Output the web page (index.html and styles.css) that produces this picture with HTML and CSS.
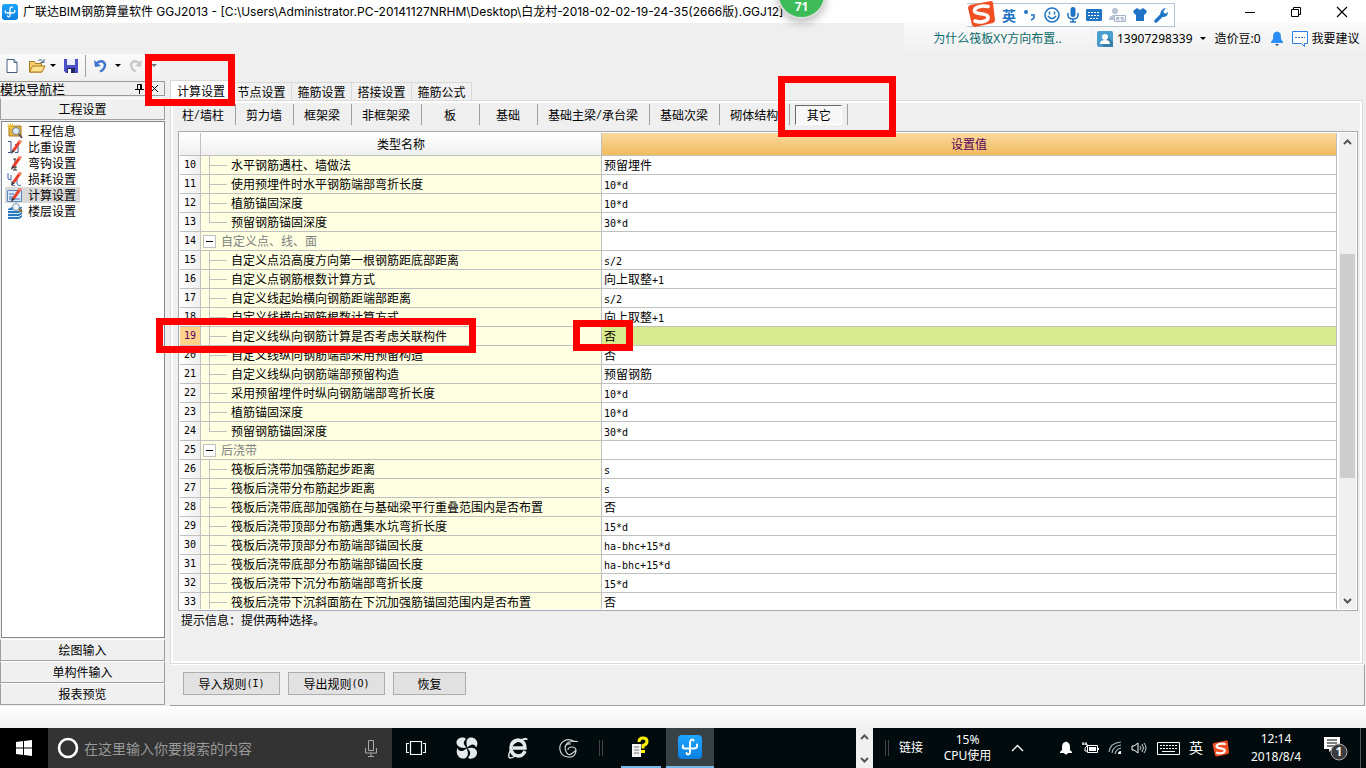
FILE: index.html
```html
<!DOCTYPE html>
<html lang="zh-CN">
<head>
<meta charset="utf-8">
<title>广联达BIM钢筋算量软件 GGJ2013</title>
<link rel="stylesheet" href="styles.css">
</head>
<body>
<svg class="defs" width="0" height="0" aria-hidden="true">
  <defs>
    <linearGradient id="blue" x1="0" y1="0" x2="0" y2="1"><stop offset="0" stop-color="#1ea6ff"/><stop offset="1" stop-color="#0b7fe0"/></linearGradient>
    <symbol id="app" viewBox="0 0 24 24"><rect width="24" height="24" rx="4" fill="url(#blue)"/><path d="M12 17V8c0-4 3-4 3.500-2.500M5 10.500c-1 3 1 3 3 3h8c3 0 3.500-2 3-4M12 13v4c0 3-3 3-3.500 1" fill="none" stroke="#fff" stroke-width="2" stroke-linecap="round"/></symbol>
    <symbol id="sogou" viewBox="0 0 28 28"><path d="M3 5 24 1q2 0 2 2l2 17q0 2-2 3L8 27q-2 0-3-2L1 8q0-2 2-3z" fill="#f04e23"/><path d="M21 6.500C15 5 7 7 7.500 11s13 1.500 13.500 6-8 6-13 4" fill="none" stroke="#fff" stroke-width="3.600" stroke-linecap="round"/></symbol>
    <symbol id="pencil" viewBox="0 0 16 16"><path d="M5 11 12 1l3 1-7 10z" fill="#e8422b"/><path d="m12 1 3 1-1 2-3-1z" fill="#f7906f"/><path d="m5 11 3 1-4 3z" fill="#333"/></symbol>
  </defs>
</svg>

<header class="titlebar">
  <svg class="app-icon" width="16" height="16"><use href="#app"/></svg>
  <h1 class="title">广联达BIM钢筋算量软件 GGJ2013 - [C:\Users\Administrator.PC-20141127NRHM\Desktop\白龙村-2018-02-02-19-24-35(2666版).GGJ12]</h1>
  <div class="win-controls">
    <button type="button" aria-label="最小化"><svg width="12" height="12" viewBox="0 0 12 12"><path d="M1 6.500h10" stroke="#000"/></svg></button>
    <button type="button" aria-label="还原"><svg width="12" height="12" viewBox="0 0 12 12"><path d="M1.500 3.500h7v7h-7zM3.500 3.500v-2h7v7h-2" fill="none" stroke="#000"/></svg></button>
    <button type="button" aria-label="关闭"><svg width="12" height="12" viewBox="0 0 12 12"><path d="m1 1 10 10M11 1 1 11" stroke="#000" stroke-width="1.200"/></svg></button>
  </div>
</header>

<section class="ribbon">
  <div class="account">
    <a class="tip" href="#">为什么筏板XY方向布置..</a>
    <div class="user">
      <svg width="16" height="16" viewBox="0 0 16 16"><rect width="16" height="16" rx="2" fill="#4a9fd0"/><path d="m10 5 6 6v5H7l-4-4z" fill="#347fa8"/><circle cx="8" cy="6" r="3" fill="#fff"/><path d="M3 13q0-4 5-4t5 4z" fill="#fff"/></svg>
      <button type="button" class="phone">13907298339<svg width="6" height="4" viewBox="0 0 6 4"><path d="M0 0h6L3 3z" fill="#000"/></svg></button>
      <span class="beans">造价豆:0</span>
      <svg class="bell" width="14" height="16" viewBox="0 0 14 16"><path d="M4 2q3-3 6 0 1 1 1 6l2 3v1H1v-1l2-3q0-5 1-6z" fill="#2c8df4"/><path d="M5 13h4l-2 2z" fill="#1b4f91"/></svg>
      <a class="advice" href="#"><svg width="16" height="16" viewBox="0 0 16 16"><path d="M.5.5h15v12h-3v3l-3-3h-9z" fill="#fff" stroke="#2c7fe0"/><path d="M3 6.500h10" stroke="#2c7fe0" stroke-dasharray="2 1"/></svg>我要建议</a>
    </div>
  </div>
  <div class="toolbar">
    <button type="button" aria-label="新建"><svg width="16" height="16" viewBox="0 0 16 16"><path d="M3 1.500h7l3 3v10H3z" fill="#fff" stroke="#44607e"/><path d="M10 1.500v3h3" fill="#bcd0e6" stroke="#44607e"/></svg></button>
    <button type="button" class="open" aria-label="打开"><svg width="18" height="16" viewBox="0 0 18 16"><path d="M1.500 14V3.500h5l1 2h6V14z" fill="#f6cd69" stroke="#a9791c"/><path d="m1.500 14 3-6H17l-3 6z" fill="#ffe08a" stroke="#a9791c"/><path d="M10 3q3-3 5 1m1-3v3.500h-3.500" fill="none" stroke="#42688d"/></svg><svg width="6" height="4" viewBox="0 0 6 4"><path d="M0 0h6L3 3z" fill="#000"/></svg></button>
    <button type="button" class="save" aria-label="保存"><svg width="16" height="16" viewBox="0 0 16 16"><path d="M1 1h14v14H3l-2-2z" fill="#4b50c8"/><path d="M4 1h8v6H4z" fill="#e8eefa"/><path d="M4 10h8v5H4z" fill="#23265d"/><path d="M5 11h3v4H5z" fill="#fff"/></svg></button>
    <button type="button" class="undo" aria-label="撤销"><svg width="14" height="14" viewBox="0 0 14 14"><path d="M3 4.500q7-5 9 1 0 5-5 7" fill="none" stroke="#3d74cf" stroke-width="2.400"/><path d="m1 1 1 7 6-1z" fill="#3d74cf"/></svg><svg width="6" height="4" viewBox="0 0 6 4"><path d="M0 0h6L3 3z" fill="#000"/></svg></button>
    <button type="button" class="redo" aria-label="重做"><svg width="14" height="14" viewBox="0 0 14 14"><path d="M11 4.500q-7-5-9 1 0 5 5 7" fill="none" stroke="#c8c8c8" stroke-width="2.400"/><path d="m13 1-1 7-6-1z" fill="#c8c8c8"/></svg><svg width="6" height="4" viewBox="0 0 6 4"><path d="M0 0h6L3 3z" fill="#777"/></svg></button>
  </div>
</section>

<div class="workspace">
  <aside class="sidebar">
    <div class="dock-title"><span>模块导航栏</span>
      <button type="button" aria-label="固定"><svg width="9" height="11" viewBox="0 0 9 11"><path d="M2.500 6V1.500h4V6M0 6.500h9M4.500 7v4M5.500 2v4" fill="none" stroke="#000"/></svg></button>
      <button type="button" class="dock-close" aria-label="关闭"><svg width="9" height="9" viewBox="0 0 9 9"><path d="m1 1 7 7M8 1 1 8" stroke="#000"/></svg></button>
    </div>
    <button type="button" class="module">工程设置</button>
    <nav class="nav">
      <a href="#"><svg width="16" height="16" viewBox="0 0 16 16"><path d="M2 3h12v10H2z" fill="#e5b343" stroke="#a67b1e"/><path d="M0 3h7M3.500 0v7M1 1l5 5M6 1 1 6" stroke="#f5c332"/><circle cx="9" cy="8" r="3.500" fill="#dcecf8" stroke="#6a7f96"/><path d="m12 11 3 4" stroke="#555" stroke-width="2"/></svg>工程信息</a>
      <a href="#"><svg width="16" height="16" viewBox="0 0 16 16"><path d="M1 2.500h3v11H1M8 5.500h3v8H8" fill="none" stroke="#3b4f8c"/><use href="#pencil"/></svg>比重设置</a>
      <a href="#"><svg width="16" height="16" viewBox="0 0 16 16"><path d="M6 4h3M8 4v11M6 12h4M6 15h4" fill="none" stroke="#333"/><use href="#pencil"/></svg>弯钩设置</a>
      <a href="#"><svg width="16" height="16" viewBox="0 0 16 16"><path d="M1 2v6l3 1V4m1 6v4l3 1m2-8v6q2 3 4 1" fill="none" stroke="#3a6ba8"/><use href="#pencil"/></svg>损耗设置</a>
      <a href="#" class="selected"><svg width="16" height="16" viewBox="0 0 16 16"><path d="M.5 3.500h14v11H.5z" fill="#dbeaff" stroke="#5788bd"/><path d="M2 7h5M2 10h4M2 12h11" stroke="#3d75b5"/><use href="#pencil"/></svg>计算设置</a>
      <a href="#"><svg width="16" height="16" viewBox="0 0 16 16"><path d="m1 6 4-2h10v10l-3 2H1z" fill="#2a7abd"/><path d="M1 7.500h11l3-2M1 10.500h11l3-2M1 13.500h11l3-2" fill="none" stroke="#d9ecfa"/><circle cx="9" cy="4" r="3.500" fill="#e9f3fb" stroke="#8296a8"/><path d="m12 6 3 3" stroke="#9a682f" stroke-width="2"/></svg>楼层设置</a>
    </nav>
    <button type="button" class="module">绘图输入</button>
    <button type="button" class="module">单构件输入</button>
    <button type="button" class="module">报表预览</button>
  </aside>

  <main class="main">
    <div class="tabs">
      <button type="button" class="active">计算设置</button><button type="button">节点设置</button><button type="button">箍筋设置</button><button type="button">搭接设置</button><button type="button">箍筋公式</button>
    </div>
    <section class="panel">
      <div class="subtabs">
        <button type="button" class="first">柱<span class="m">/</span>墙柱</button><button type="button">剪力墙</button><button type="button">框架梁</button><button type="button">非框架梁</button><button type="button">板</button><button type="button">基础</button><button type="button">基础主梁<span class="m">/</span>承台梁</button><button type="button">基础次梁</button><button type="button">砌体结构</button><button type="button" class="pressed"><span>其它</span></button>
      </div>
      <div class="grid">
        <div class="grid-view">
        <table>
          <colgroup><col class="c-no"><col class="c-name"><col></colgroup>
          <thead><tr><th></th><th>类型名称</th><th class="sorted">设置值</th></tr></thead>
          <tbody>
            <tr><th>10</th><td><div class="leaf">水平钢筋遇柱、墙做法</div></td><td>预留埋件</td></tr>
            <tr><th>11</th><td><div class="leaf">使用预埋件时水平钢筋端部弯折长度</div></td><td><span class="m">10*d</span></td></tr>
            <tr><th>12</th><td><div class="leaf">植筋锚固深度</div></td><td><span class="m">10*d</span></td></tr>
            <tr><th>13</th><td><div class="leaf last">预留钢筋锚固深度</div></td><td><span class="m">30*d</span></td></tr>
            <tr><th>14</th><td><div class="group"><button type="button" aria-label="折叠"></button>自定义点、线、面</div></td><td></td></tr>
            <tr><th>15</th><td><div class="leaf">自定义点沿高度方向第一根钢筋距底部距离</div></td><td><span class="m">s/2</span></td></tr>
            <tr><th>16</th><td><div class="leaf">自定义点钢筋根数计算方式</div></td><td>向上取整<span class="m">+1</span></td></tr>
            <tr><th>17</th><td><div class="leaf">自定义线起始横向钢筋距端部距离</div></td><td><span class="m">s/2</span></td></tr>
            <tr><th>18</th><td><div class="leaf">自定义线横向钢筋根数计算方式</div></td><td>向上取整<span class="m">+1</span></td></tr>
            <tr class="current"><th>19</th><td><div class="leaf">自定义线纵向钢筋计算是否考虑关联构件</div></td><td>否</td></tr>
            <tr><th>20</th><td><div class="leaf">自定义线纵向钢筋端部采用预留构造</div></td><td>否</td></tr>
            <tr><th>21</th><td><div class="leaf">自定义线纵向钢筋端部预留构造</div></td><td>预留钢筋</td></tr>
            <tr><th>22</th><td><div class="leaf">采用预留埋件时纵向钢筋端部弯折长度</div></td><td><span class="m">10*d</span></td></tr>
            <tr><th>23</th><td><div class="leaf">植筋锚固深度</div></td><td><span class="m">10*d</span></td></tr>
            <tr><th>24</th><td><div class="leaf last">预留钢筋锚固深度</div></td><td><span class="m">30*d</span></td></tr>
            <tr><th>25</th><td><div class="group"><button type="button" aria-label="折叠"></button>后浇带</div></td><td></td></tr>
            <tr><th>26</th><td><div class="leaf">筏板后浇带加强筋起步距离</div></td><td><span class="m">s</span></td></tr>
            <tr><th>27</th><td><div class="leaf">筏板后浇带分布筋起步距离</div></td><td><span class="m">s</span></td></tr>
            <tr><th>28</th><td><div class="leaf">筏板后浇带底部加强筋在与基础梁平行重叠范围内是否布置</div></td><td>否</td></tr>
            <tr><th>29</th><td><div class="leaf">筏板后浇带顶部分布筋遇集水坑弯折长度</div></td><td><span class="m">15*d</span></td></tr>
            <tr><th>30</th><td><div class="leaf">筏板后浇带顶部分布筋端部锚固长度</div></td><td><span class="m">ha-bhc+15*d</span></td></tr>
            <tr><th>31</th><td><div class="leaf">筏板后浇带底部分布筋端部锚固长度</div></td><td><span class="m">ha-bhc+15*d</span></td></tr>
            <tr><th>32</th><td><div class="leaf">筏板后浇带下沉分布筋端部弯折长度</div></td><td><span class="m">15*d</span></td></tr>
            <tr><th>33</th><td><div class="leaf">筏板后浇带下沉斜面筋在下沉加强筋锚固范围内是否布置</div></td><td>否</td></tr>
          </tbody>
        </table>
        </div>
        <div class="scrollbar">
          <button type="button" aria-label="向上滚动"><svg width="9" height="6" viewBox="0 0 9 6"><path d="m1 5 3.500-3.500L8 5" fill="none" stroke="#555" stroke-width="2"/></svg></button>
          <div class="track"><div class="thumb"></div></div>
          <button type="button" aria-label="向下滚动"><svg width="9" height="6" viewBox="0 0 9 6"><path d="m1 1 3.500 3.500L8 1" fill="none" stroke="#555" stroke-width="2"/></svg></button>
        </div>
      </div>
      <p class="hint">提示信息：提供两种选择。</p>
    </section>
    <section class="actions">
      <button type="button" class="wide">导入规则<span class="m">(I)</span></button>
      <button type="button" class="wide">导出规则<span class="m">(O)</span></button>
      <button type="button">恢复</button>
    </section>
  </main>
</div>
<div class="status"></div>

<footer class="taskbar">
  <button type="button" class="start" aria-label="开始"><svg width="16" height="16" viewBox="0 0 16 16"><path d="m0 2 7-1v6.500H0zM8 1l8-1v7.500H8zM0 8.500h7V15l-7-1zM8 8.500h8V16l-8-1z" fill="#fff"/></svg></button>
  <div class="search">
    <svg width="22" height="22" viewBox="0 0 22 22"><circle cx="11" cy="11" r="9" fill="none" stroke="#fff" stroke-width="2.600"/></svg>
    <input type="text" aria-label="搜索" placeholder="在这里输入你要搜索的内容">
    <svg width="12" height="17" viewBox="0 0 12 17"><path d="M3.500.5h5v10h-5zM.5 8v5h11V8M6 13v3M3 16.500h6" fill="none" stroke="#aaa"/></svg>
  </div>
  <div class="apps">
    <button type="button" aria-label="任务视图"><svg width="20" height="16" viewBox="0 0 20 16"><path d="M4.500 1.500h11v13h-11zM3 3.500H.5v9H3M17 3.500h2.500v9H17" fill="none" stroke="#fff" stroke-width="1.200"/></svg></button>
    <button type="button" aria-label="浏览器"><svg width="22" height="22" viewBox="0 0 22 22"><g fill="#e6eaeb"><path d="M10.500 10.500C5 12 0 9 .5 5S7-1 10 2c-3 3-3 5 .5 8.500z"/><path d="M11.500 10.500C9 5 11-.5 16 .5s7 6 4 10c-1-4-5-4-8.500 0z"/><path d="M11.500 11.500c6-2 10 1 9.500 5s-6 7-9 4c3-3 3-6-.5-9z"/><path d="M10.500 11.500c3 5 1 10.500-4 10s-7-6-5-10.500c1 4 5 4 9 .5z"/></g></svg></button>
    <button type="button" aria-label="IE"><svg width="22" height="22" viewBox="0 0 22 22"><path d="M18 14q-2 5-7 5-7-1-7-8t7-8q7 1 7 8H6" fill="none" stroke="#e6eaeb" stroke-width="3.400"/><path d="M14 3q6-3 6 0M4 12q-4 8-1 9 3 0 6-3M3 11Q7 3 19 2" fill="none" stroke="#e6eaeb" stroke-width="1.400"/></svg></button>
    <button type="button" aria-label="广联达"><svg width="20" height="20" viewBox="0 0 20 20"><path d="M19 3.500H15Q10 0 5 3T1 12t8 7 8-6q0-4-4-4-4 0-4 3M19 3.500q-8-1-11 2t-1 8 6 2 4-4M12 6q-5-1-6 3" fill="none" stroke="#cdd2d3" stroke-width="1.200"/></svg></button>
    <span class="grip"></span>
    <button type="button" class="running" aria-label="帮助"><svg width="20" height="22" viewBox="0 0 20 22"><path d="M1 8h9v13H1z" fill="#f3f3f3"/><path d="M3 11h5M3 14h5M3 17h5" stroke="#777"/><path d="M8 6q0-4 4-4t4 3.500q0 3-4 4v3" fill="none" stroke="#fff200" stroke-width="3"/><path d="M10 14h4v3h-4z" fill="#fff200"/></svg></button>
    <button type="button" class="running focused" aria-label="GGJ2013"><svg width="24" height="24"><use href="#app"/></svg></button>
  </div>
  <div class="mini-scroll"><svg width="9" height="6" viewBox="0 0 9 6"><path d="m1 5 3.500-3.500L8 5" fill="none" stroke="#555" stroke-width="2"/></svg><svg width="9" height="6" viewBox="0 0 9 6"><path d="m1 1 3.500 3.500L8 1" fill="none" stroke="#555" stroke-width="2"/></svg></div>
  <div class="tray">
    <span class="grip"></span>
    <span class="links">链接</span>
    <div class="cpu"><span>15%</span><span>CPU使用</span></div>
    <div class="tray-icons">
      <svg class="more" width="13" height="8" viewBox="0 0 13 8"><path d="m1 7 5.500-5.500L12 7" fill="none" stroke="#fff" stroke-width="1.400"/></svg>
      <svg width="14" height="14" viewBox="0 0 14 14"><path d="M6 1q1-1 2 0 3 1 3 5v3l2 2v1H1v-1l2-2V6q0-4 3-5zM5 12h4q-2 3-4 0z" fill="#fff"/></svg>
      <svg width="17" height="14" viewBox="0 0 17 14"><path d="M5.500 4.500h10v7h-10z" fill="none" stroke="#fff"/><path d="M7 6h7v4H7zM16 7h1v2h-1z" fill="#fff"/><path d="M1 1v3M4 1v3M0 3h5v2L3 7v3h2" fill="none" stroke="#fff"/></svg>
      <svg width="14" height="14" viewBox="0 0 14 14"><path d="M1 11Q2 2 13 1M4 12q1-7 9-8M7 13q1-5 6-6" fill="none" stroke="#aeb5b8" stroke-width="1.200"/><path d="M10 13q0-3 3-3v3z" fill="#fff"/></svg>
      <svg width="17" height="14" viewBox="0 0 17 14"><path d="M1 5h2l4-3v10L3 9H1z" fill="none" stroke="#fff"/><path d="M9 5q2 2 0 4M11 3q3 4 0 8M13 2q4 5 0 10" fill="none" stroke="#cfd4d6"/></svg>
      <svg width="23" height="13" viewBox="0 0 23 13"><path d="M.5.5h22v12H.5z" fill="none" stroke="#fff"/><path d="M3 3.500h17M3 6.500h17" stroke="#fff" stroke-dasharray="2 1"/><path d="M5 9.500h13" stroke="#fff"/></svg>
      <span class="ime">英</span>
      <svg width="17" height="17"><use href="#sogou"/></svg>
    </div>
    <div class="clock"><span>12:14</span><span>2018/8/4</span></div>
    <button type="button" class="notice" aria-label="通知"><svg width="26" height="26" viewBox="0 0 26 26"><path d="M1 2h16v12h-8l-3 3v-3H1z" fill="#fff"/><path d="M4 5h10M4 8h10M4 11h7" stroke="#000"/><circle cx="16" cy="17" r="8" fill="#3c3c3c" stroke="#aaa"/><text x="16" y="21" text-anchor="middle" class="count">1</text></svg></button>
    <span class="peek"></span>
  </div>
</footer>

<div class="ime-bar">
  <svg class="ime-logo" width="28" height="28"><use href="#sogou"/></svg>
  <span class="ime-lang">英</span>
  <svg width="14" height="14" viewBox="0 0 14 14"><circle cx="3" cy="4" r="2" fill="#1f74c6"/><path d="M8 7h3v2q0 2-3 3" fill="none" stroke="#1f74c6" stroke-width="1.600"/></svg>
  <svg width="16" height="16" viewBox="0 0 16 16"><circle cx="8" cy="8" r="7" fill="none" stroke="#1f74c6" stroke-width="1.600"/><path d="M5.500 4.500v3M10.500 4.500v3M4 9q4 5 8 0" fill="none" stroke="#1f74c6" stroke-width="1.500"/></svg>
  <svg width="12" height="16" viewBox="0 0 12 16"><rect x="3.500" width="5" height="10" rx="2.500" fill="#1f74c6"/><path d="M1 6v2q0 4 5 4t5-4V6M6 12v3M3 15h6" fill="none" stroke="#1f74c6" stroke-width="1.600"/></svg>
  <svg width="16" height="12" viewBox="0 0 16 12"><rect width="16" height="12" rx="1" fill="#1f74c6"/><path d="M2 3.500h12M2 6.500h12M4 9.500h8" stroke="#fff" stroke-dasharray="2 1"/></svg>
  <svg width="17" height="16" viewBox="0 0 17 16"><circle cx="6" cy="4" r="3" fill="#b7c2d4"/><path d="M0 13q0-5 6-5 3 0 5 2v3z" fill="#b7c2d4"/><path d="M5.500 8.500h11v6h-11z" fill="#fff" stroke="#a6b4c8"/><path d="M7 10.500h3v1H7.500v1.500h3M15 10.500h-3v1.500h3v1h-3" fill="none" stroke="#a6b4c8"/></svg>
  <svg width="14" height="14" viewBox="0 0 14 14"><path d="m4 0 3 2 3-2 4 3-2 4-1-1v7H3V6L2 7 0 3z" fill="#1f74c6"/></svg>
  <svg width="15" height="15" viewBox="0 0 15 15"><path d="M2 13 9 6" stroke="#1f74c6" stroke-width="3.400" stroke-linecap="round"/><path d="M14 4q0 5-5 5Q5 7 7 3q2-3 5-3L9.500 3v2.500h2.500z" fill="#1f74c6"/></svg>
</div>
<div class="ball">71</div>
<div class="mark mark-tab"></div>
<div class="mark mark-other"></div>
<div class="mark mark-row"></div>
<div class="mark mark-value"></div>
</body>
</html>
```
FILE: styles.css
```css
* { box-sizing: border-box; }
body {
  margin: 0; height: 100vh; display: flex; flex-direction: column; overflow: hidden;
  position: relative; background: #efefef; color: #000;
  font: 12px/16px "Noto Sans CJK SC", sans-serif;
}
button { margin: 0; padding: 0; border: 0; background: none; font: inherit; color: inherit; }
button, a { display: inline-flex; align-items: center; justify-content: center; white-space: nowrap; }
a { color: inherit; text-decoration: none; }
svg { flex: none; display: block; }
.defs { position: absolute; }
.m { font-family: "DejaVu Sans Mono", monospace; font-size: 10px; line-height: 10px; }

/* Title bar */
.titlebar { flex: none; height: 23px; display: flex; align-items: center; background: #fff; padding-left: 2px; }
.title { margin: 0 0 0 5px; flex: 1; font: 12px/22px Inter, "Noto Sans CJK SC", sans-serif; white-space: nowrap; }
.win-controls { display: flex; height: 20px; padding-right: 1px; }
.win-controls button { width: 46px; }

/* Ribbon */
.ribbon { flex: none; height: 58px; display: flex; flex-direction: column; }
.account { align-self: flex-end; height: 31px; width: 462px; display: flex; align-items: center; background: linear-gradient(#fafafa, #efefef); }
.tip { width: 187px; color: #0b6b6b; font-family: "Noto Sans", "Noto Sans CJK SC", sans-serif; }
.user { flex: 1; display: flex; align-items: center; height: 28px; padding-left: 5px; border-left: 1px solid #f0f0f0; font-family: "Noto Sans", "Noto Sans CJK SC", sans-serif; }
.phone { margin-left: 4px; gap: 7px; }
.beans { margin-left: 9px; }
.bell { margin-left: 9px; }
.advice { margin-left: 8px; gap: 4px; }
.toolbar { display: flex; align-items: center; width: 160px; height: 24px; padding-left: 4px; background: linear-gradient(#fafafa, #f1f1f1); border-radius: 2px; }
.toolbar button { height: 22px; }
.toolbar .open { margin-left: 8px; gap: 4px; }
.toolbar .save { margin-left: 7px; }
.toolbar .undo { margin-left: 6px; padding-left: 7px; gap: 8px; border-left: 1px solid #a0a0a0; }
.toolbar .redo { margin-left: 8px; gap: 8px; }

/* Layout */
.workspace { flex: 1; min-height: 0; display: flex; gap: 5px; }
.sidebar { width: 165px; flex: none; display: flex; flex-direction: column; padding-bottom: 1px; }
.dock-title { display: flex; align-items: center; height: 15px; margin-bottom: 2px; border-top: 1px solid #999; border-bottom: 1px solid #999; border-right: 1px solid #999; font-size: 13px; line-height: 13px; }
.dock-title span { flex: 1; }
.dock-close { width: 20px; }
.module { flex: none; height: 22px; border: 1px solid #a0a0a0; border-top-color: #fff; background: #f0f0f0; }
.nav { flex: 1; display: flex; flex-direction: column; align-items: flex-start; margin: 1px 0 1px 1px; padding: 1px 3px; background: #fff; border: 1px solid #828790; }
.nav a { height: 16px; gap: 5px; padding: 0 4px 0 2px; line-height: 16px; }
.nav .selected { background: #d9d9d9; }
.main { flex: 1; min-width: 0; display: flex; flex-direction: column; padding-right: 1px; }
.tabs { display: flex; align-items: flex-end; height: 19px; flex: none; }
.tabs button { height: 18px; width: 60px; border: 1px solid #d9d9d9; border-width: 1px 1px 0 0; background: #f0f0f0; }
.tabs .active { height: 20px; width: 62px; background: #fff; border-left-width: 1px; }
.panel { flex: 1; min-height: 0; display: flex; flex-direction: column; margin-right: 2px; border: 1px solid #d9d9d9; box-shadow: inset 0 0 0 2px #fff; padding: 3px 4px 2px 7px; }
.subtabs { display: flex; height: 21px; flex: none; margin-bottom: 6px; }
.subtabs button { min-width: 58px; padding: 0 11px 0 10px; border-right: 1px solid #a0a0a0; }
.subtabs .first { padding: 0 10px 0 3px; }
.subtabs .pressed { padding: 0 5px; }
.pressed span { flex: 1; padding: 1px 0; background: #f7f7f7; border: 1px solid; border-color: #696969 #fff #fff #696969; }

/* Settings grid */
.grid { flex: 1; min-height: 0; display: flex; padding: 1px; background: #fff; border: 1px solid #a9a9b3; }
.grid-view { flex: 1; overflow: hidden; }
table { width: 100%; table-layout: fixed; border-collapse: separate; border-spacing: 0; }
.c-no { width: 21px; }
.c-name { width: 401px; }
th, td { height: 19px; padding: 0 0 0 2px; border: 0 solid #c0c0c0; border-width: 0 1px 1px 0; line-height: 18px; text-align: left; font-weight: normal; white-space: nowrap; }
tbody th { padding: 0; text-align: center; background: linear-gradient(90deg, #fff, #efefef); font: 10px/18px "DejaVu Sans Mono", monospace; }
thead th { height: 23px; padding: 0; text-align: center; background: linear-gradient(#fff, #efefef); }
thead .sorted { background: linear-gradient(#fad8a0, #f0bd5c); color: #5a0060; }
td:nth-child(2) { padding: 0; background: #ffffe1; }
.leaf, .group { display: flex; align-items: center; height: 18px; }
.leaf::before { content: ""; width: 17px; height: 19px; flex: none; margin: 0 4px 0 8px; border-left: 1px solid #c0c0c0; background: linear-gradient(#c0c0c0, #c0c0c0) 0 9px / 100% 1px no-repeat; }
.leaf.last::before { height: 10px; align-self: flex-start; }
.group { color: #808080; }
.group button { width: 13px; height: 13px; margin: 0 5px 0 2px; border: 1px solid #c0c0c0; background: linear-gradient(#000, #000) center / 7px 1px no-repeat #fff; }
.current th { background: #ffd38c; color: #5a0060; }
.current td:last-child { background: #d9ea8c; }
.scrollbar { width: 17px; margin-left: 2px; display: flex; flex-direction: column; align-items: center; background: #f0f0f0; }
.scrollbar button { height: 17px; width: 17px; }
.track { flex: 1; width: 15px; display: flex; flex-direction: column; }
.track::before { content: ""; flex: 104; }
.track::after { content: ""; flex: 114; }
.thumb { flex: 224; background: #cdcdcd; }
.hint { flex: none; height: 50px; margin: 0; padding: 1px 3px; }
.actions { flex: none; height: 42px; display: flex; gap: 8px; padding: 7px 13px; border: 1px solid #a0a0a0; border-width: 1px 1px 1px 0; border-top-color: #fff; }
.actions button { width: 73px; height: 23px; background: #e1e1e1; border: 1px solid #adadad; }
.actions .wide { width: 97px; }
.status { flex: none; height: 22px; background: linear-gradient(#fff, #f0f0f0); }

/* Taskbar */
.taskbar { flex: none; height: 40px; display: flex; background: #010b0e; color: #fff; font-family: "Noto Sans", "Noto Sans CJK SC", sans-serif; }
.start { width: 48px; background: #000; }
.search { width: 344px; display: flex; align-items: center; padding: 0 15px 0 9px; background: #333; }
.search input { flex: 1; min-width: 0; margin: 0; padding: 0 5px; border: 0; outline: 0; background: none; color: #fff; font: 14px/20px "Noto Sans CJK SC", sans-serif; }
.search input::placeholder { color: #999; opacity: 1; }
.apps { flex: 1; display: flex; align-items: center; }
.apps button { width: 48px; height: 40px; margin-right: 3px; }
.grip { flex: none; width: 4px; height: 16px; border: 1px solid #444; border-width: 0 1px; }
.apps .grip { margin: 0 18px 0 3px; }
.apps .running { width: 40px; border-bottom: 2px solid #76b9ed; margin-right: 5px; }
.apps .focused { width: 48px; background: #384144; }
.mini-scroll { width: 17px; display: flex; flex-direction: column; align-items: center; justify-content: space-between; padding: 6px 0 5px; background: #f0f0f0; }
.tray { display: flex; align-items: center; width: 493px; padding-left: 12px; }
.links { margin-left: 10px; }
.cpu, .clock { flex: none; display: flex; flex-direction: column; align-items: center; }
.cpu { width: 49px; margin-left: 20px; }
.tray-icons { display: flex; align-items: center; gap: 9px; margin-left: 19px; }
.more { margin-right: 26px; }
.ime { font-size: 14px; }
.clock { width: 64px; margin-left: 15px; line-height: 18px; }
.notice { flex: none; width: 48px; height: 40px; margin-left: 4px; }
.count { font: bold 12px "Noto Sans", sans-serif; fill: #fff; }
.peek { height: 40px; border-left: 1px solid #555; }

/* Floating layers */
.ime-bar { position: absolute; top: 3px; right: 191px; height: 24px; display: flex; align-items: center; gap: 7px; padding: 0 5px 0 0; background: #fff; border: 1px solid #b3c3d3; border-left: 0; }
.ime-logo { margin: -3px 0 0 0; }
.ime-lang { color: #1f74c6; font-size: 14px; font-weight: bold; }
.ball { position: absolute; top: -30px; left: 777px; width: 49px; height: 49px; padding-top: 27px; border: 2px solid #dcdcdc; border-radius: 50%; background: #3cbb58; color: #fff; text-align: center; font: bold 12px/16px "Noto Sans", sans-serif; box-shadow: 0 4px 8px #00000040; }
.mark { position: absolute; border: 7px solid #f00; pointer-events: none; }
.mark-tab { left: 145px; top: 54px; width: 90px; height: 52px; }
.mark-other { left: 778px; top: 76px; width: 118px; height: 61px; }
.mark-row { left: 156px; top: 318px; width: 320px; height: 35px; }
.mark-value { left: 573px; top: 320px; width: 60px; height: 31px; }
```
